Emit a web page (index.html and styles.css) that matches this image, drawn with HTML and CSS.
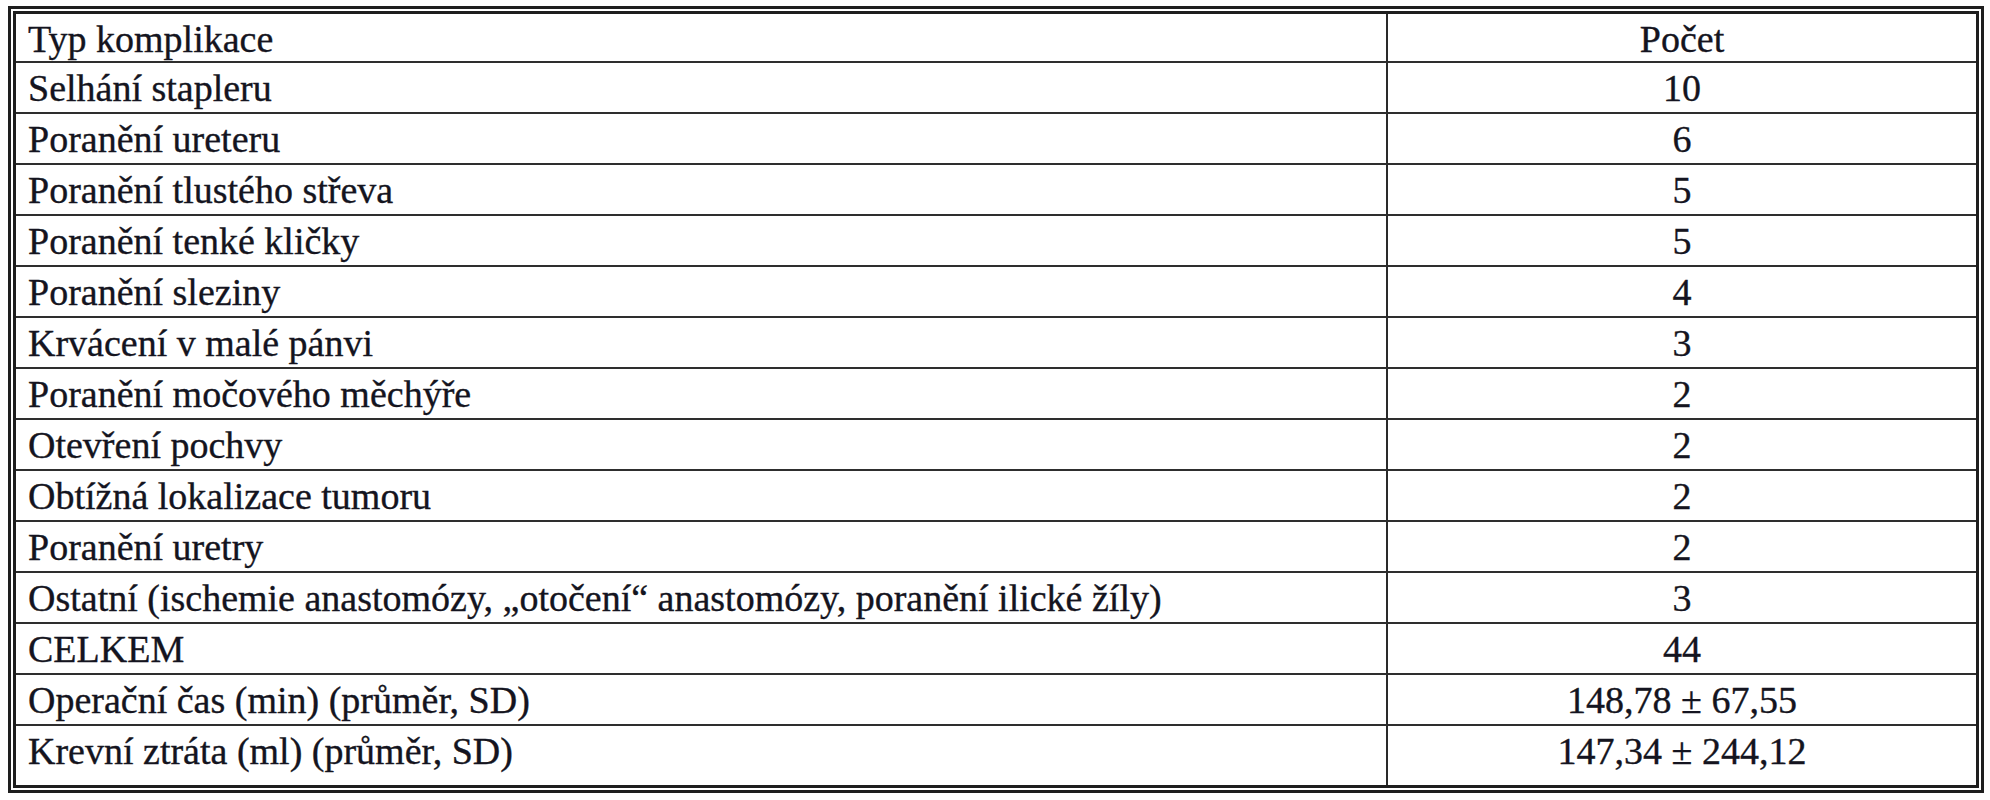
FILE: index.html
```html
<!DOCTYPE html>
<html lang="cs">
<head>
<meta charset="utf-8">
<title>Komplikace</title>
<link rel="stylesheet" href="styles.css">
</head>
<body>
<div class="frame">
  <table class="grid">
    <tr class="head"><td class="name">Typ komplikace</td><td class="count">Počet</td></tr>
    <tr><td class="name">Selhání stapleru</td><td class="count">10</td></tr>
    <tr><td class="name">Poranění ureteru</td><td class="count">6</td></tr>
    <tr><td class="name">Poranění tlustého střeva</td><td class="count">5</td></tr>
    <tr><td class="name">Poranění tenké kličky</td><td class="count">5</td></tr>
    <tr><td class="name">Poranění sleziny</td><td class="count">4</td></tr>
    <tr><td class="name">Krvácení v malé pánvi</td><td class="count">3</td></tr>
    <tr><td class="name">Poranění močového měchýře</td><td class="count">2</td></tr>
    <tr><td class="name">Otevření pochvy</td><td class="count">2</td></tr>
    <tr><td class="name">Obtížná lokalizace tumoru</td><td class="count">2</td></tr>
    <tr><td class="name">Poranění uretry</td><td class="count">2</td></tr>
    <tr><td class="name">Ostatní (ischemie anastomózy, „otočení“ anastomózy, poranění ilické žíly)</td><td class="count">3</td></tr>
    <tr><td class="name">CELKEM</td><td class="count">44</td></tr>
    <tr><td class="name">Operační čas (min) (průměr, SD)</td><td class="count">148,78 ± 67,55</td></tr>
    <tr class="last"><td class="name">Krevní ztráta (ml) (průměr, SD)</td><td class="count">147,34 ± 244,12</td></tr>
  </table>
</div>
</body>
</html>
```

FILE: styles.css
```css
html, body {
  margin: 0;
  padding: 0;
  background: #ffffff;
}

body {
  padding: 6px 0 0 8px;
  font-family: "Liberation Serif", "Times New Roman", serif;
  color: #141420;
}

.frame {
  width: 1976px;
  height: 787px;
  box-sizing: border-box;
  border: 3px solid #1e1e1e;
  padding: 2px;
}

.grid {
  width: 100%;
  height: 100%;
  box-sizing: border-box;
  border: 3px solid #1e1e1e;
  border-spacing: 0;
  table-layout: fixed;
}

.grid tr {
  height: 51px;
}

.grid tr.head {
  height: 49px;
}

.grid tr.last {
  height: auto;
}

.grid td {
  box-sizing: border-box;
  vertical-align: top;
  font-size: 38px;
  line-height: 38px;
  padding: 6px 0 0 0;
  border-bottom: 2px solid #2e2e2e;
  white-space: nowrap;
  -webkit-text-stroke: 0.35px #141420;
}

.grid tr.last td {
  border-bottom: none;
}

.grid td.name {
  width: 1372px;
  padding-left: 12px;
  border-right: 2px solid #2a2a2a;
}

.grid td.count {
  text-align: center;
}
```
